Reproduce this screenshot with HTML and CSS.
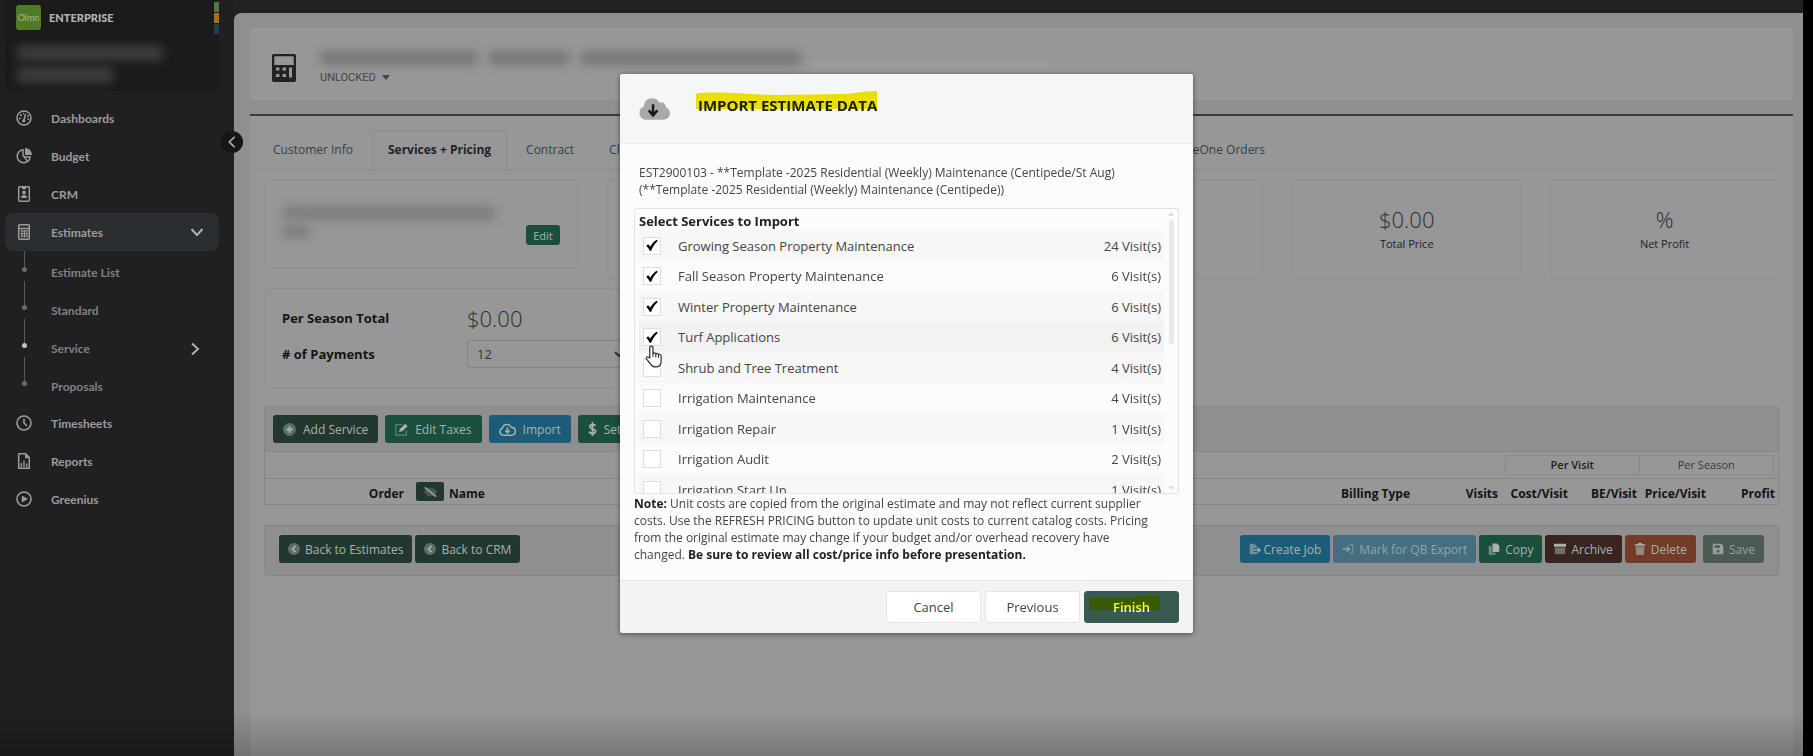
FILE: index.html
```html
<!DOCTYPE html>
<html lang="en">
<head>
    <meta charset="UTF-8">
    <meta name="viewport" content="width=device-width, initial-scale=1.0">
    <title>Estimates - Import Estimate Data</title>
    <link rel="stylesheet" href="styles.css">
</head>
<body>
    <!-- Shared icons -->
    <svg class="sprite" aria-hidden="true">
        <symbol id="i-chevron-left" viewBox="0 0 16 16"><path d="M11 2L5 8l6 6" fill="none" stroke="currentColor" stroke-width="2"/></symbol>
        <symbol id="i-back" viewBox="0 0 16 16"><circle cx="8" cy="8" r="8" fill="currentColor" opacity=".45"/><path d="M10 4L6 8l4 4" fill="none" stroke="currentColor" stroke-width="2.2"/></symbol>
        <symbol id="i-check" viewBox="0 0 16 16"><path d="M1 8.5L3 6.5c1.2.8 2 1.800 2.800 3C8 6 10.500 3 14 1l1 1.500C11.500 5.500 9 9.500 7 14.500H5.200C4.200 12 3 10 1 8.500z" fill="currentColor"/></symbol>
    </svg>

    <div class="app">
        <aside class="sidebar">
            <div class="brand">
                <div class="brand-row">
                    <span class="logo">Olmn</span>
                    <span class="plan">ENTERPRISE</span>
                    <span class="stripes"><i class="green"></i><i class="orange"></i><i class="blue"></i></span>
                </div>
                <div class="company">
                    <span class="smudge company-a"></span>
                    <span class="smudge company-b"></span>
                </div>
            </div>

            <nav class="nav">
                <a href="#" class="nav-item">
                    <svg class="nav-icon" viewBox="0 0 16 16"><circle cx="8" cy="8" r="7" fill="none" stroke="currentColor" stroke-width="1.500"/><path d="M9.500 4L8 10" stroke="currentColor" stroke-width="1.500"/><circle cx="7.800" cy="10.800" r="1.600" fill="currentColor"/><g fill="currentColor"><circle cx="3.800" cy="8.500" r="1"/><circle cx="5" cy="5.300" r="1"/><circle cx="12" cy="6" r="1"/><circle cx="12.300" cy="9" r="1"/><circle cx="7.600" cy="3.600" r=".8"/></g></svg>
                    Dashboards
                </a>
                <a href="#" class="nav-item">
                    <svg class="nav-icon" viewBox="0 0 16 16"><path d="M7 1.800A6.500 6.500 0 1 0 14.200 9H8.500L7 7.500z" fill="none" stroke="currentColor" stroke-width="1.500"/><path d="M9 0a7 7 0 0 1 7 7H9z" fill="currentColor"/><path d="M8 9l3.500 4" stroke="currentColor" stroke-width="1.200"/></svg>
                    Budget
                </a>
                <a href="#" class="nav-item">
                    <svg class="nav-icon" viewBox="0 0 16 16"><rect x="2.700" y=".8" width="10.600" height="14.400" rx="1" fill="none" stroke="currentColor" stroke-width="1.500"/><path d="M6 1h4v2.200H6z" fill="currentColor"/><circle cx="8" cy="6.500" r="1.900" fill="currentColor"/><path d="M4.800 12c0-4 6.400-4 6.400 0z" fill="currentColor"/></svg>
                    CRM
                </a>
                <a href="#" class="nav-item active">
                    <svg class="nav-icon" viewBox="0 0 16 16"><rect x="2.700" y=".8" width="10.600" height="14.400" rx="1" fill="none" stroke="currentColor" stroke-width="1.500"/><path d="M3 4.500h10" stroke="currentColor" stroke-width="1.500"/><path d="M4.500 7h7M4.500 9.500h7M4.500 12h7M6 6v7.500M8.500 6v7.500M11 6v7.500" stroke="currentColor" stroke-width="1"/></svg>
                    Estimates
                    <svg class="nav-arrow" viewBox="0 0 16 16"><path d="M2.500 5L8 11l5.500-6" fill="none" stroke="currentColor" stroke-width="2"/></svg>
                </a>
                <div class="subnav">
                    <a href="#" class="sub-item">Estimate List</a>
                    <a href="#" class="sub-item">Standard</a>
                    <a href="#" class="sub-item current">Service
                        <svg class="nav-arrow" viewBox="0 0 16 16"><path d="M3 2.500L9 8l-6 5.500" fill="none" stroke="currentColor" stroke-width="2"/></svg>
                    </a>
                    <a href="#" class="sub-item">Proposals</a>
                </div>
                <a href="#" class="nav-item">
                    <svg class="nav-icon" viewBox="0 0 16 16"><circle cx="8" cy="8" r="7" fill="none" stroke="currentColor" stroke-width="1.600"/><path d="M8 3.800V8l3 3" fill="none" stroke="currentColor" stroke-width="1.600"/></svg>
                    Timesheets
                </a>
                <a href="#" class="nav-item">
                    <svg class="nav-icon" viewBox="0 0 16 16"><path d="M2.700 .8h7l3.600 3.600v10.800H2.700z" fill="none" stroke="currentColor" stroke-width="1.500" stroke-linejoin="round"/><path d="M9 .8v4.500h4.300z" fill="currentColor"/><path d="M5.300 14v-4M8 14V7.500M10.700 14v-3.500" stroke="currentColor" stroke-width="1.400"/></svg>
                    Reports
                </a>
                <a href="#" class="nav-item">
                    <svg class="nav-icon" viewBox="0 0 16 16"><circle cx="8" cy="8" r="7" fill="none" stroke="currentColor" stroke-width="1.600"/><path d="M5.800 4.500L12 8l-6.200 3.500z" fill="currentColor"/></svg>
                    Greenius
                </a>
            </nav>
            <button class="collapse" aria-label="Collapse menu"><svg viewBox="0 0 16 16"><use href="#i-chevron-left"/></svg></button>
        </aside>

        <main class="content">
            <header class="page-head">
                <svg class="head-icon" viewBox="0 0 24 28"><rect x="1" y="1" width="22" height="26" rx="2" fill="none" stroke="currentColor" stroke-width="2.500"/><path d="M2 11h20v15H2z" fill="currentColor"/><g fill="#979797"><rect x="4" y="13.500" width="3.500" height="3"/><rect x="10.500" y="13.500" width="3.500" height="3"/><rect x="4" y="20" width="3.500" height="3"/><rect x="10.500" y="20" width="3.500" height="3"/><rect x="17" y="13.500" width="3" height="10"/></g></svg>
                <div class="head-text">
                    <div class="title-row">
                        <span class="smudge title-a"></span>
                        <span class="smudge title-b"></span>
                        <span class="smudge title-c"></span>
                        <span class="streak"></span>
                    </div>
                    <button class="lock">UNLOCKED <i class="caret"></i></button>
                </div>
            </header>

            <section class="panel">
                <nav class="tabs">
                    <a href="#" class="tab">Customer Info</a>
                    <a href="#" class="tab active">Services + Pricing</a>
                    <a href="#" class="tab">Contract</a>
                    <a href="#" class="tab">Client</a>
                    <a href="#" class="tab tab-last">SiteOne Orders</a>
                </nav>

                <div class="panel-body">
                    <div class="stats">
                        <div class="card budget">
                            <div class="budget-name">
                                <span class="smudge name-a"></span>
                                <span class="smudge name-b"></span>
                            </div>
                            <button class="btn green small">Edit</button>
                        </div>
                        <div class="card stat"></div>
                        <div class="card stat"></div>
                        <div class="card stat"><span class="amount">$0.00</span><span>Total Price</span></div>
                        <div class="card stat"><span class="amount">%</span><span>Net Profit</span></div>
                    </div>

                    <div class="card season">
                        <span class="label">Per Season Total</span>
                        <span class="amount">$0.00</span>
                        <label class="label" for="payments"># of Payments</label>
                        <select id="payments"><option>12</option></select>
                    </div>

                    <div class="services">
                        <div class="toolbar">
                            <button class="btn dark"><svg viewBox="0 0 16 16"><circle cx="8" cy="8" r="8" fill="currentColor" opacity=".45"/><path d="M8 4v8M4 8h8" stroke="currentColor" stroke-width="2.400"/></svg>Add Service</button>
                            <button class="btn green"><svg viewBox="0 0 16 16"><path d="M9 2H1v13h13V9" fill="none" stroke="currentColor" stroke-width="1.500" opacity=".5"/><path d="M5 11l1-3.500L12.500 1 15.500 4 9 10.200z" fill="currentColor"/></svg>Edit Taxes</button>
                            <button class="btn blue"><svg class="wide" viewBox="0 0 18 16"><path d="M4.500 14A3.700 3.700 0 0 1 3.500 6.800 5 5 0 0 1 13 5.500a4.300 4.300 0 0 1 1 8.500z" fill="none" stroke="currentColor" stroke-width="1.600"/><path d="M9 5.500v6M6.500 9L9 11.500 11.500 9" fill="none" stroke="currentColor" stroke-width="1.600"/></svg>Import</button>
                            <button class="btn green"><svg class="slim" viewBox="0 0 10 16"><path d="M8.500 4.500C7.500 2.500 2 2.500 2 5.300S8.500 7.500 8.500 10.700 2 13.500 1.200 11M5 0v16" fill="none" stroke="currentColor" stroke-width="2"/></svg>Set Pricing</button>
                        </div>
                        <div class="view-row">
                            <div class="toggle">
                                <button class="on">Per Visit</button><button>Per Season</button>
                            </div>
                        </div>
                        <table class="grid">
                            <thead>
                                <tr>
                                    <th class="c-order">Order</th>
                                    <th class="c-eye"><button class="eye" aria-label="Hide columns"><svg viewBox="0 0 16 12"><path d="M1 6c4-6 10-6 14 0-4 6-10 6-14 0z" fill="currentColor" opacity=".3"/><path d="M2 1l12 10" stroke="currentColor" stroke-width="1.600"/></svg></button></th>
                                    <th class="c-name">Name</th>
                                    <th class="c-bill">Billing Type</th>
                                    <th class="c-visits">Visits</th>
                                    <th class="c-cost">Cost/Visit</th>
                                    <th class="c-be">BE/Visit</th>
                                    <th class="c-price">Price/Visit</th>
                                    <th class="c-profit">Profit</th>
                                </tr>
                            </thead>
                        </table>
                    </div>

                    <div class="actions">
                        <button class="btn dark"><svg viewBox="0 0 16 16"><use href="#i-back"/></svg>Back to Estimates</button>
                        <button class="btn dark"><svg viewBox="0 0 16 16"><use href="#i-back"/></svg>Back to CRM</button>
                        <span class="push"></span>
                        <button class="btn blue tight"><svg viewBox="0 0 16 16"><path d="M1 1h6l4 4v2H6v5h5v3H1z" fill="currentColor" opacity=".6"/><path d="M6 9.500h7M11.500 6.500l3.300 3-3.300 3" fill="none" stroke="currentColor" stroke-width="1.800"/></svg>Create Job</button>
                        <button class="btn pale"><svg viewBox="0 0 16 16"><path d="M1 8h9M6.500 4.500L10 8l-3.500 3.500" fill="none" stroke="currentColor" stroke-width="1.800"/><path d="M10 2.500h4v11h-4" fill="none" stroke="currentColor" stroke-width="1.800" opacity=".6"/></svg>Mark for QB Export</button>
                        <button class="btn green"><svg viewBox="0 0 16 16"><path d="M1 4h4v9h5v2.500H1z" fill="currentColor" opacity=".6"/><path d="M6 .5h6L15 3.500V12H6z" fill="currentColor"/></svg>Copy</button>
                        <button class="btn brown"><svg viewBox="0 0 16 16"><path d="M0 1h16v4H0z" fill="currentColor"/><path d="M1 6h14v9H1z" fill="currentColor" opacity=".5"/></svg>Archive</button>
                        <button class="btn red"><svg viewBox="0 0 16 16"><path d="M1 1.500h4L6 0h4l1 1.500h4v2H1z" fill="currentColor"/><path d="M2 4.500h12L13 16H3z" fill="currentColor" opacity=".65"/></svg>Delete</button>
                        <button class="btn grey"><svg viewBox="0 0 16 16"><path d="M1 1h11l3 3v11H1z M3.500 3v3.500h7V3z M8 9a2 2 0 1 0 .01 0z" fill="currentColor" fill-rule="evenodd"/></svg>Save</button>
                    </div>
                </div>
            </section>
        </main>
    </div>

    <div class="shade"></div>

    <div class="overlay">
        <form class="modal" role="dialog" aria-labelledby="modal-title">
            <header class="modal-head">
                <svg class="cloud" viewBox="0 0 32 22"><path d="M7 22A7 7 0 0 1 5 8.500C5 3 9 0 13.500 0c3.500 0 6 1.500 7.500 4.500 3.500-1.500 7 1 6.500 4.500C30 10 32 12.500 32 15.500 32 19 29 22 25.500 22z" fill="#a9a9ac"/><path d="M14.500 6v10M10 12.500l4.500 5 4.500-5" fill="none" stroke="#14191e" stroke-width="2.600"/></svg>
                <h1 id="modal-title">IMPORT ESTIMATE DATA
                    <svg class="marker" viewBox="0 0 181 19" preserveAspectRatio="none"><path d="M0 3C2 1 30 1 55 3s60 0 90 0c14 0 20-3 36-3v18H0z" fill="#f7e600"/></svg>
                </h1>
            </header>

            <div class="modal-body">
                <p class="source">EST2900103 - **Template -2025 Residential (Weekly) Maintenance (Centipede/St Aug)<br>(**Template -2025 Residential (Weekly) Maintenance (Centipede))</p>

                <div class="picker">
                    <div class="picker-list">
                        <h2>Select Services to Import</h2>
                        <label class="service"><input type="checkbox" checked><svg class="tick"><use href="#i-check"/></svg><span>Growing Season Property Maintenance</span><span class="visits">24 Visit(s)</span></label>
                        <label class="service"><input type="checkbox" checked><svg class="tick"><use href="#i-check"/></svg><span>Fall Season Property Maintenance</span><span class="visits">6 Visit(s)</span></label>
                        <label class="service"><input type="checkbox" checked><svg class="tick"><use href="#i-check"/></svg><span>Winter Property Maintenance</span><span class="visits">6 Visit(s)</span></label>
                        <label class="service hover"><input type="checkbox" checked><svg class="tick"><use href="#i-check"/></svg><span>Turf Applications</span><span class="visits">6 Visit(s)</span>
                            <svg class="hand" viewBox="0 0 19 25"><path d="M5 14V3.200a1.700 1.700 0 0 1 3.400 0V9.500c.5-1.300 2.800-1 3 .5.700-1.200 2.600-.8 2.800.7.900-.9 2.800-.3 2.800 1.300v5.500c0 3.500-2 6-5.500 6-3 0-4.500-1-6-3.500L1.500 15c-.8-1.500 1-2.800 2.200-1.600z" fill="#fff" stroke="#333" stroke-width="1.300"/><path d="M8.400 9v4M11.400 10v3.500M14.200 11v3" stroke="#333" stroke-width="1.100"/></svg>
                        </label>
                        <label class="service"><input type="checkbox"><svg class="tick"><use href="#i-check"/></svg><span>Shrub and Tree Treatment</span><span class="visits">4 Visit(s)</span></label>
                        <label class="service"><input type="checkbox"><svg class="tick"><use href="#i-check"/></svg><span>Irrigation Maintenance</span><span class="visits">4 Visit(s)</span></label>
                        <label class="service"><input type="checkbox"><svg class="tick"><use href="#i-check"/></svg><span>Irrigation Repair</span><span class="visits">1 Visit(s)</span></label>
                        <label class="service"><input type="checkbox"><svg class="tick"><use href="#i-check"/></svg><span>Irrigation Audit</span><span class="visits">2 Visit(s)</span></label>
                        <label class="service"><input type="checkbox"><svg class="tick"><use href="#i-check"/></svg><span>Irrigation Start Up</span><span class="visits">1 Visit(s)</span></label>
                    </div>
                    <div class="scroll"><i class="up"></i><i class="thumb"></i><i class="down"></i></div>
                </div>

                <p class="note"><b>Note:</b> Unit costs are copied from the original estimate and may not reflect current supplier costs. Use the REFRESH PRICING button to update unit costs to current catalog costs. Pricing from the original estimate may change if your budget and/or overhead recovery have changed. <b>Be sure to review all cost/price info before presentation.</b></p>
            </div>

            <footer class="modal-foot">
                <button type="button">Cancel</button>
                <button type="button">Previous</button>
                <button type="submit" class="finish">Finish
                    <svg class="marker" viewBox="0 0 71 15" preserveAspectRatio="none"><path d="M0 2h36L50 0h21v14H0z" fill="#ffff00"/></svg>
                </button>
            </footer>
        </form>
    </div>
</body>
</html>
```

FILE: styles.css
```css
* {
    box-sizing: border-box;
}

body {
    margin: 0;
    background: #000;
    color: #222;
    font-family: "Open Sans", "Noto Sans", sans-serif;
    font-size: 13px;
}

a {
    color: inherit;
    text-decoration: none;
}

button {
    font: inherit;
    color: inherit;
    border: none;
    background: none;
    padding: 0;
    cursor: pointer;
}

.sprite {
    display: none;
}

.app {
    display: flex;
    min-height: 100vh;
    margin-right: 10px;
    background: #222224;
}

/* Redacted text */
.smudge {
    display: block;
    border-radius: 6px;
    filter: blur(5px);
}

/* Sidebar */
.sidebar {
    position: relative;
    flex: 0 0 234px;
    padding: 0 15px 0 5px;
    background: #202022;
    font-family: Lato, sans-serif;
}

.brand {
    height: 91px;
    padding-left: 11px;
    background: #1b1b1b;
    border-radius: 0 0 8px 8px;
}

.brand-row {
    display: flex;
    align-items: center;
    height: 35px;
}

.logo {
    width: 25px;
    height: 25px;
    border-radius: 3px;
    background: #4f7a28;
    color: #a3b78f;
    font-size: 9px;
    line-height: 25px;
    text-align: center;
}

.plan {
    margin-left: 8px;
    color: #b4b4b4;
    font-size: 11px;
    font-weight: 900;
}

.stripes {
    display: grid;
    gap: 1px;
    width: 5px;
    margin-left: auto;
}

.stripes i {
    height: 10px;
}

.stripes .green { background: #507a3c; }
.stripes .orange { background: #a86e28; }
.stripes .blue { background: #1d3f52; }

.company {
    padding-top: 10px;
}

.company .smudge {
    height: 16px;
    margin-bottom: 6px;
    background: #3c3c3c;
}

.company-a { width: 148px; }
.company-b { width: 98px; }

.nav {
    padding-top: 8px;
    color: #9c9c9c;
    font-size: 12px;
    font-weight: 700;
}

.nav-item,
.sub-item {
    display: flex;
    align-items: center;
    height: 38px;
    padding-right: 14px;
}

.nav-item {
    padding-left: 11px;
    border-radius: 8px;
}

.nav-item.active {
    background: #2a2e30;
}

.nav-icon {
    width: 16px;
    height: 16px;
    margin-right: 19px;
}

.nav-arrow {
    width: 16px;
    height: 16px;
    margin-left: auto;
    color: #b0b0b0;
}

.subnav {
    padding-bottom: 1px;
    color: #808080;
}

.sub-item {
    position: relative;
    padding-top: 5px;
    padding-left: 46px;
}

.sub-item::before {
    content: "";
    position: absolute;
    left: 19px;
    top: -8px;
    width: 1px;
    height: 26px;
    background: #5a5a5a;
}

.sub-item:first-child::before {
    top: 0;
    height: 18px;
}

.sub-item::after {
    content: "";
    position: absolute;
    left: 17px;
    top: 16px;
    width: 5px;
    height: 5px;
    border-radius: 50%;
    background: #6a6a6a;
}

.sub-item.current::after {
    background: #c4c4c4;
}

.collapse {
    position: absolute;
    right: -9px;
    top: 131px;
    width: 22px;
    height: 22px;
    border-radius: 50%;
    background: #161616;
    color: #b0b0b0;
    line-height: 0;
}

.collapse svg {
    width: 14px;
    height: 14px;
}

/* Page */
.content {
    display: flex;
    flex-direction: column;
    flex: 1;
    min-width: 0;
    margin-top: 13px;
    padding: 15px 10px 0 16px;
    border-radius: 7px 0 0 0;
    background: #8f8f8f;
}

.page-head {
    display: flex;
    align-items: center;
    gap: 24px;
    height: 72px;
    margin-bottom: 14px;
    padding-left: 22px;
    background: #979797;
}

.head-icon {
    width: 24px;
    height: 28px;
    margin-top: 8px;
    color: #222;
}

.head-text {
    padding-top: 7px;
}

.title-row {
    display: flex;
    align-items: center;
    gap: 10px;
    height: 20px;
}

.title-row .smudge {
    height: 14px;
    background: #77777a;
}

.title-a { width: 158px; }
.title-b { width: 82px; }
.title-c { width: 222px; }

.streak {
    width: 236px;
    height: 7px;
    margin-top: 14px;
    background: #9b9b9b;
}

.lock {
    display: flex;
    align-items: center;
    gap: 6px;
    height: 20px;
    color: #444;
    font-family: Roboto, sans-serif;
    font-size: 11px;
}

.caret {
    border: 4px solid transparent;
    border-top: 5px solid #444;
    border-bottom: 0;
}

.panel {
    flex: 1;
    border-top: 2px solid #3c3c3c;
    background: #979797;
}

.tabs {
    display: flex;
    gap: 3px;
    margin: 14px 14px 0 7px;
    border-bottom: 1px solid #8b8b8b;
    font-size: 12px;
}

.tab {
    height: 39px;
    padding: 0 15px;
    border: 1px solid transparent;
    border-bottom: 0;
    color: #2f4247;
    line-height: 37px;
}

.tab.active {
    margin-bottom: -1px;
    border-color: #8b8b8b;
    border-radius: 4px 4px 0 0;
    background: #979797;
    color: #1f2326;
    font-weight: 700;
}

.tab-last {
    margin-left: auto;
    margin-right: 498px;
}

.panel-body {
    padding: 9px 14px 0;
}

.card {
    border: 1px solid #8f8f8f;
    border-radius: 3px;
}

.stats {
    display: grid;
    grid-template-columns: 314fr 399fr 229fr 229fr 229fr;
    gap: 29px;
    align-items: start;
}

.stat {
    display: flex;
    flex-direction: column;
    align-items: center;
    height: 100px;
    padding-top: 23px;
    font-size: 11px;
    line-height: 18px;
}

.amount {
    color: #2c2e33;
    font-size: 22px;
    font-weight: 300;
    line-height: 32px;
}

.budget {
    display: flex;
    height: 90px;
    padding: 26px 17px 0;
}

.budget-name {
    flex: 1;
}

.budget-name .smudge {
    height: 14px;
    margin-bottom: 5px;
    background: #7e7e80;
}

.name-a { width: 214px; }
.name-b { width: 28px; }

.season {
    display: grid;
    grid-template-columns: 185px 161px;
    grid-template-rows: 32px 28px;
    row-gap: 6px;
    align-content: start;
    align-items: center;
    width: 50%;
    height: 100px;
    margin-top: 9px;
    padding: 13px 17px 0;
}

.season .label {
    font-weight: 700;
    color: #141414;
}

.season select {
    height: 28px;
    padding-left: 5px;
    border: 1px solid #838383;
    border-radius: 3px;
    background: #979797;
    color: #333;
    font: inherit;
}

/* Buttons */
.btn {
    display: inline-flex;
    align-items: center;
    gap: 7px;
    height: 28px;
    padding: 0 10px;
    border-radius: 3px;
    color: #a9b2ae;
    font-size: 12px;
    white-space: nowrap;
}

.btn svg {
    width: 13px;
    height: 13px;
}

.btn svg.wide {
    width: 17px;
    height: 15px;
}

.btn svg.slim {
    width: 9px;
    height: 14px;
}

.btn.small {
    height: 20px;
    margin-top: 19px;
    padding: 0 7px;
    font-size: 11px;
}

.btn.dark { background: #22382f; }
.btn.green { background: #1a4f3b; }
.btn.blue { background: #1b5c7a; }
.btn.pale { background: #456e80; color: #8fa5ae; }
.btn.brown { background: #38251f; }
.btn.red { background: #743c28; }
.btn.grey { background: #4c5a54; color: #999f9c; }

.services {
    margin-top: 18px;
    border: 1px solid #868686;
    border-radius: 3px 3px 0 0;
}

.toolbar {
    display: flex;
    gap: 7px;
    height: 45px;
    padding: 8px;
    border-bottom: 1px solid #868686;
    background: #8f8f8f;
}

.view-row {
    display: flex;
    justify-content: flex-end;
    height: 27px;
    padding: 3px 4px;
    border-bottom: 1px solid #868686;
}

.toggle {
    display: grid;
    grid-template-columns: 1fr 1fr;
    width: 269px;
    border: 1px solid #898989;
    border-radius: 3px;
    color: #34383f;
    font-size: 11px;
    line-height: 18px;
}

.toggle .on {
    border-right: 1px solid #898989;
    color: #1c1c1c;
    font-weight: 600;
}

.grid {
    width: 100%;
    height: 25px;
    table-layout: fixed;
    border-collapse: collapse;
    font-size: 12px;
    color: #141414;
}

.grid th {
    padding: 4px 3px 0 0;
    text-align: right;
    line-height: 16px;
}

.grid .c-eye {
    width: 40px;
    padding-top: 0;
}

.grid .c-name {
    padding-left: 2px;
    text-align: left;
}

.c-order { width: 142px; }
.c-bill { width: 150px; }
.c-visits { width: 88px; }
.c-cost { width: 70px; }
.c-be { width: 69px; }
.c-price { width: 69px; }
.c-profit { width: 69px; }

.eye {
    display: block;
    width: 28px;
    height: 19px;
    margin-left: auto;
    border-radius: 2px;
    background: #22382f;
    color: #a0a8a4;
    line-height: 0;
}

.eye svg {
    width: 15px;
    height: 12px;
}

.actions {
    display: flex;
    align-items: flex-start;
    gap: 3px;
    height: 51px;
    margin-top: 20px;
    padding: 9px 14px;
    border: 1px solid #868686;
    border-radius: 3px;
    background: #8f8f8f;
}

.actions .btn {
    gap: 5px;
    padding: 0 9px;
}

.actions .btn.tight {
    gap: 3px;
}

.actions .btn svg {
    width: 12px;
    height: 12px;
}

.push {
    flex: 1;
}

.actions .grey {
    margin-left: 4px;
}

/* Darkens the bottom edge of the window */
.shade {
    position: fixed;
    left: 0;
    right: 0;
    bottom: 0;
    height: 44px;
    background: linear-gradient(transparent, rgba(0, 0, 0, 0.2));
}

/* Modal */
.overlay {
    position: fixed;
    inset: 0;
    display: flex;
    justify-content: center;
    align-items: flex-start;
    padding-top: 74px;
}

.modal {
    width: 573px;
    border-radius: 3px;
    background: #fcfcfc;
    box-shadow: 0 1px 5px rgba(0, 0, 0, 0.5);
    color: #444;
    overflow: hidden;
}

.modal-head {
    display: flex;
    align-items: center;
    gap: 28px;
    height: 70px;
    padding: 0 19px;
    border-bottom: 1px solid #e8eaec;
    background: #f4f6f8;
}

.cloud {
    width: 31px;
    height: 22px;
}

.modal-head h1 {
    position: relative;
    margin: 0 0 8px;
    color: #1c2126;
    font-size: 15px;
    font-weight: 700;
    line-height: 20px;
}

/* Highlighter strokes */
.marker {
    position: absolute;
    left: -2px;
    top: -4px;
    width: 181px;
    height: 19px;
    mix-blend-mode: multiply;
}

.modal-body {
    padding: 20px 14px 17px;
}

.source {
    margin: 0 0 10px;
    padding: 0 5px;
    font-size: 12px;
    line-height: 17px;
}

.picker {
    display: flex;
    height: 286px;
    border: 1px solid #e2e2e2;
    border-radius: 3px;
    overflow: hidden;
}

.picker-list {
    flex: 1;
    padding-left: 4px;
}

.picker h2 {
    margin: 0;
    padding-top: 3px;
    color: #222;
    font-size: 13px;
    line-height: 18px;
}

.service {
    position: relative;
    display: flex;
    align-items: center;
    height: 30px;
    padding: 0 3px 0 4px;
}

.service:nth-of-type(odd) {
    height: 31px;
    background: #f7f7f7;
}

.service.hover {
    background: #f2f2f2;
}

.service input {
    appearance: none;
    width: 18px;
    height: 18px;
    margin: 0 17px 0 0;
    border: 1px solid #ddd;
    background: #fff;
}

.tick {
    position: absolute;
    left: 6px;
    top: 9px;
    width: 14px;
    height: 13px;
    color: #000;
    visibility: hidden;
}

.service input:checked + .tick {
    visibility: visible;
}

.visits {
    margin-left: auto;
}

.hand {
    position: absolute;
    left: 6px;
    top: 22px;
    z-index: 1;
    width: 18px;
    height: 25px;
}

.scroll {
    display: flex;
    flex-direction: column;
    align-items: center;
    width: 14px;
    padding: 3px 0;
}

.scroll .up,
.scroll .down {
    border: 3px solid transparent;
}

.scroll .up {
    border-bottom: 4px solid #ddd;
    border-top: 0;
}

.scroll .down {
    margin-top: auto;
    border-top: 4px solid #ddd;
    border-bottom: 0;
}

.scroll .thumb {
    width: 5px;
    height: 124px;
    margin-top: 4px;
    border-radius: 3px;
    background: #e9e9e9;
}

.note {
    margin: 0;
    padding: 1px 20px 0 0;
    font-size: 12px;
    line-height: 17px;
}

.note b {
    color: #222;
}

.modal-foot {
    display: flex;
    justify-content: flex-end;
    gap: 4px;
    padding: 10px 14px;
    border-top: 1px solid #e3e3e3;
    background: #f3f3f3;
}

.modal-foot button {
    position: relative;
    width: 95px;
    height: 32px;
    border: 1px solid #e3e3e3;
    border-radius: 3px;
    background: #fff;
    font-size: 13px;
}

.modal-foot .finish {
    border-color: #385a50;
    background: #385a50;
    color: #fff;
    font-weight: 600;
}

.finish .marker {
    left: 4px;
    top: 4px;
    width: 71px;
    height: 15px;
}
```
